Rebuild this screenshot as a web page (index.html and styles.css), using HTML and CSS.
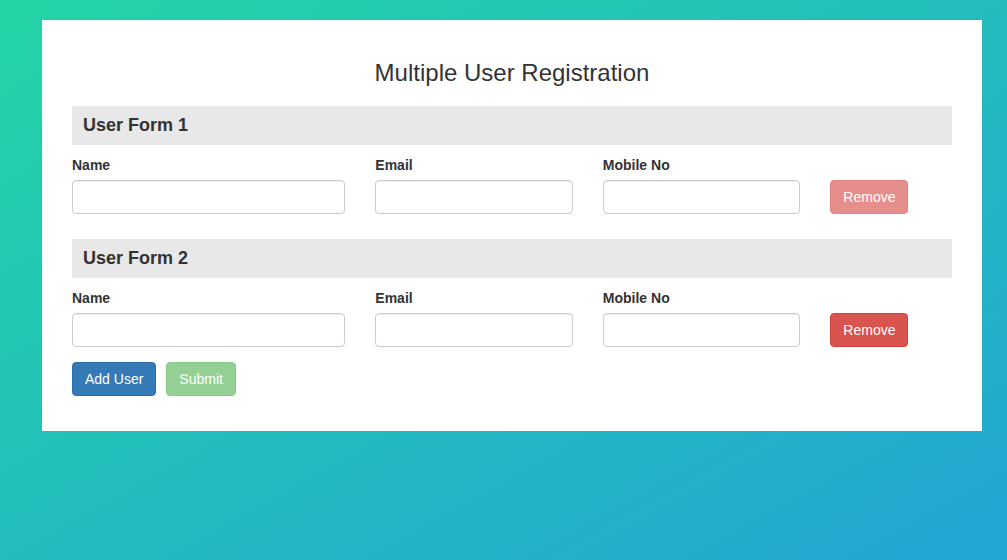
FILE: index.html
```html
<!DOCTYPE html>
<html lang="en">
<head>
<meta charset="utf-8">
<title>Multiple User Registration</title>
<link rel="stylesheet" href="styles.css">
</head>
<body>
<div class="card">
  <h3 class="title">Multiple User Registration</h3>

  <section class="user-form">
    <div class="form-head">User Form 1</div>
    <div class="form-row">
      <div class="field">
        <label>Name</label>
        <input type="text" class="input">
      </div>
      <div class="field">
        <label>Email</label>
        <input type="text" class="input">
      </div>
      <div class="field">
        <label>Mobile No</label>
        <input type="text" class="input">
      </div>
      <div class="field action">
        <button class="btn btn-danger" disabled>Remove</button>
      </div>
    </div>
  </section>

  <section class="user-form">
    <div class="form-head">User Form 2</div>
    <div class="form-row">
      <div class="field">
        <label>Name</label>
        <input type="text" class="input">
      </div>
      <div class="field">
        <label>Email</label>
        <input type="text" class="input">
      </div>
      <div class="field">
        <label>Mobile No</label>
        <input type="text" class="input">
      </div>
      <div class="field action">
        <button class="btn btn-danger">Remove</button>
      </div>
    </div>
  </section>

  <div class="actions">
    <button class="btn btn-primary">Add User</button>
    <button class="btn btn-success" disabled>Submit</button>
  </div>
</div>
</body>
</html>
```

FILE: styles.css
```css
html, body {
  margin: 0;
  padding: 0;
}
body {
  min-height: 560px;
  background: linear-gradient(to bottom right, #24d4a5, #21a5d4);
  font-family: "Liberation Sans", Arial, sans-serif;
  font-size: 14px;
  line-height: 20px;
  color: #333;
  padding: 20px 0 0 42px;
  box-sizing: border-box;
}
.card {
  width: 940px;
  background: #fff;
  padding: 40px 30px 35px;
  box-sizing: border-box;
}
.title {
  margin: 0 0 20px;
  font-size: 24px;
  font-weight: 400;
  line-height: 26px;
  text-align: center;
  color: #333;
}
.form-head {
  background: #e8e8e8;
  height: 39px;
  line-height: 39px;
  padding: 0 11px;
  font-size: 18px;
  font-weight: 700;
  color: #333;
}
.form-row {
  display: grid;
  grid-template-columns: 273.33px 197.5px 197.5px 1fr;
  column-gap: 30px;
  margin-top: 10px;
  margin-bottom: 25px;
}
.user-form:nth-of-type(2) .form-row {
  margin-bottom: 15px;
}
.field {
  display: flex;
  flex-direction: column;
}
.field label {
  font-weight: 700;
  margin-bottom: 5px;
  line-height: 20px;
}
.field.action {
  justify-content: flex-end;
  align-items: flex-start;
}
.input {
  height: 34px;
  box-sizing: border-box;
  border: 1px solid #ccc;
  border-radius: 4px;
  box-shadow: inset 0 1px 1px rgba(0, 0, 0, .075);
  padding: 6px 12px;
  font: inherit;
  margin: 0;
}
.btn {
  font-family: "Liberation Sans", Arial, sans-serif;
  font-size: 14px;
  line-height: 20px;
  padding: 6px 12px;
  border: 1px solid transparent;
  border-radius: 4px;
  color: #fff;
  margin: 0;
  height: 34px;
  box-sizing: border-box;
}
.btn[disabled] {
  opacity: .65;
}
.btn-danger {
  background: #d9534f;
  border-color: #d43f3a;
}
.btn-primary {
  background: #337ab7;
  border-color: #2e6da4;
}
.btn-success {
  background: #5cb85c;
  border-color: #4cae4c;
}
.actions {
  display: flex;
  gap: 10px;
}
```
